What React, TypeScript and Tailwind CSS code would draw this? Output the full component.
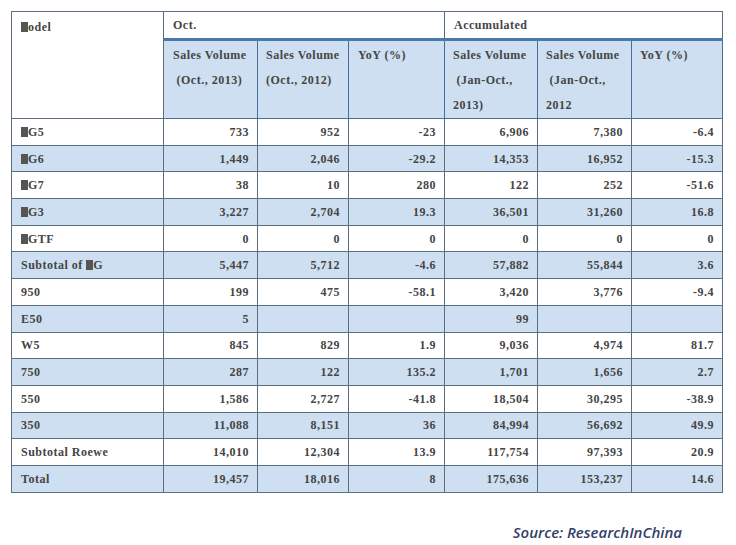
import React from "react"

type Row = { name: string; m?: boolean; vals: string[]; blue: boolean }

const rows: Row[] = [
  { name: "G5", m: true, vals: ["733", "952", "-23", "6,906", "7,380", "-6.4"], blue: false },
  { name: "G6", m: true, vals: ["1,449", "2,046", "-29.2", "14,353", "16,952", "-15.3"], blue: true },
  { name: "G7", m: true, vals: ["38", "10", "280", "122", "252", "-51.6"], blue: false },
  { name: "G3", m: true, vals: ["3,227", "2,704", "19.3", "36,501", "31,260", "16.8"], blue: true },
  { name: "GTF", m: true, vals: ["0", "0", "0", "0", "0", "0"], blue: false },
  { name: "Subtotal of ", vals: ["5,447", "5,712", "-4.6", "57,882", "55,844", "3.6"], blue: true },
  { name: "950", vals: ["199", "475", "-58.1", "3,420", "3,776", "-9.4"], blue: false },
  { name: "E50", vals: ["5", "", "", "99", "", ""], blue: true },
  { name: "W5", vals: ["845", "829", "1.9", "9,036", "4,974", "81.7"], blue: false },
  { name: "750", vals: ["287", "122", "135.2", "1,701", "1,656", "2.7"], blue: true },
  { name: "550", vals: ["1,586", "2,727", "-41.8", "18,504", "30,295", "-38.9"], blue: false },
  { name: "350", vals: ["11,088", "8,151", "36", "84,994", "56,692", "49.9"], blue: true },
  { name: "Subtotal Roewe", vals: ["14,010", "12,304", "13.9", "117,754", "97,393", "20.9"], blue: false },
  { name: "Total", vals: ["19,457", "18,016", "8", "175,636", "153,237", "14.6"], blue: true },
]

function Block() {
  return <span className="inline-block w-[7px] h-[10px] bg-[#555] align-[-1px]" />
}

const cell = "border border-[#5b6e80] px-[9px] whitespace-nowrap"
const head = "border border-[#4a6f96] pl-[8px] pr-0 align-top pt-[2px] whitespace-nowrap"
const font = { fontFamily: '"Liberation Serif", serif' }

export default function App() {
  return (
    <div className="w-[736px] h-[545px] bg-white text-[#454545] text-[12px] font-bold tracking-[0.5px]" style={font}>
      <div className="pt-[11px] pl-[11px]">
        <table className="table-fixed border-collapse w-[712px]">
          <colgroup>
            <col className="w-[152px]" />
            <col className="w-[94px]" />
            <col className="w-[91px]" />
            <col className="w-[96px]" />
            <col className="w-[93px]" />
            <col className="w-[94px]" />
            <col className="w-[91px]" />
          </colgroup>
          <thead>
            <tr className="h-[28px]">
              <td rowSpan={2} className={`${cell} align-top pt-[6px] bg-white`}>
                <Block />odel
              </td>
              <td colSpan={3} className={`${cell} border-b-[3px] border-b-[#4a78a8] bg-white`}>Oct.</td>
              <td colSpan={3} className={`${cell} border-b-[3px] border-b-[#4a78a8] bg-white`}>Accumulated</td>
            </tr>
            <tr className="h-[77px] bg-[#cddff0] leading-[25px]">
              <td className={`${head} pl-[9px]`}>Sales Volume<br />&nbsp;(Oct., 2013)</td>
              <td className={head}>Sales Volume<br />(Oct., 2012)</td>
              <td className={`${head} pl-[9px]`}>YoY (%)</td>
              <td className={head}>Sales Volume<br />&nbsp;(Jan-Oct.,<br />2013)</td>
              <td className={head}>Sales Volume<br />&nbsp;(Jan-Oct.,<br />2012</td>
              <td className={head}>YoY (%)</td>
            </tr>
          </thead>
          <tbody>
            {rows.map((r) => (
              <tr key={r.name} className={`h-[26.7px] ${r.blue ? "bg-[#cddff0]" : "bg-white"}`}>
                <td className={cell}>
                  {r.m && <Block />}
                  {r.name}
                  {r.name === "Subtotal of " && (
                    <>
                      <Block />G
                    </>
                  )}
                </td>
                {r.vals.map((v, i) => (
                  <td key={i} className={`${cell} text-right pr-[8px]`}>{v}</td>
                ))}
              </tr>
            ))}
          </tbody>
        </table>
      </div>
      <div className="flex justify-end pr-[54px] mt-[28px]">
        <span className="italic font-semibold text-[15px] text-[#33406a] tracking-normal" style={{ fontFamily: '"Open Sans", sans-serif' }}>
          Source: ResearchInChina
        </span>
      </div>
    </div>
  )
}
